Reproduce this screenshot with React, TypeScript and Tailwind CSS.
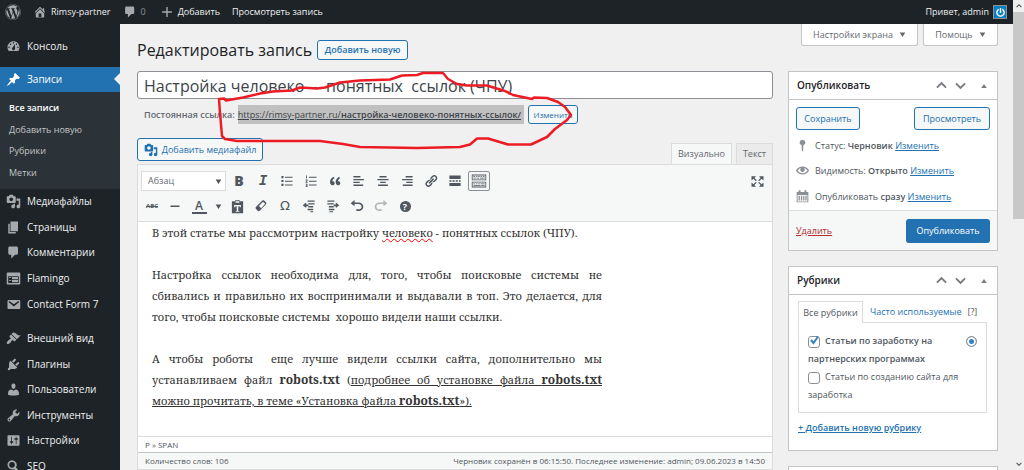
import { useState, type ReactNode } from "react";
import { FaPowerOff, FaWordpress } from "react-icons/fa";

const PATHS = {
  dashboard:
    "M3.76 16h12.48c1.1-1.37 1.76-3.11 1.76-5 0-4.42-3.58-8-8-8s-8 3.58-8 8c0 1.89.66 3.63 1.76 5zM10 4c.55 0 1 .45 1 1s-.45 1-1 1-1-.45-1-1 .45-1 1-1zM6 6c.55 0 1 .45 1 1s-.45 1-1 1-1-.45-1-1 .45-1 1-1zm8 0c.55 0 1 .45 1 1s-.45 1-1 1-1-.45-1-1 .45-1 1-1zm-5.37 5.55L12 7v6c0 1.1-.9 2-2 2s-2-.9-2-2c0-.57.24-1.08.63-1.45zM4 10c.55 0 1 .45 1 1s-.45 1-1 1-1-.45-1-1 .45-1 1-1zm12 0c.55 0 1 .45 1 1s-.45 1-1 1-1-.45-1-1 .45-1 1-1z",
  pin: "M10.44 3.02l1.82-1.82 6.36 6.35-1.83 1.82c-1.05-.68-2.48-.57-3.41.36l-.75.75c-.92.93-1.04 2.35-.35 3.41l-1.83 1.82-2.41-2.41-2.8 2.79c-.42.42-3.38 2.71-3.8 2.29s1.86-3.39 2.28-3.81l2.79-2.79L4.1 9.36l1.83-1.82c1.05.69 2.48.57 3.4-.36l.75-.75c.93-.92 1.05-2.35.36-3.41z",
  media:
    "M13 11V4c0-.55-.45-1-1-1h-1.67L9 1H5L3.67 3H2c-.55 0-1 .45-1 1v7c0 .55.45 1 1 1h10c.55 0 1-.45 1-1zM7 4.5c1.38 0 2.5 1.12 2.5 2.5S8.38 9.5 7 9.5 4.5 8.38 4.5 7 5.62 4.5 7 4.5zM14 6h5v10.5c0 1.38-1.12 2.5-2.5 2.5S14 17.88 14 16.5s1.12-2.5 2.5-2.5c.17 0 .34.02.5.05V9h-3V6zm-4 8.05V13h2v3.5c0 1.38-1.12 2.5-2.5 2.5S7 17.88 7 16.5 8.12 14 9.5 14c.17 0 .34.02.5.05z",
  page: "M6 15V2h10v13H6zm-1 1h8v2H3V5h2v11z",
  comments: "M5 2h9c1.1 0 2 .9 2 2v7c0 1.1-.9 2-2 2h-2l-5 5v-5H5c-1.1 0-2-.9-2-2V4c0-1.1.9-2 2-2z",
  feedback:
    "M2 2h16c.55 0 1 .45 1 1v14c0 .55-.45 1-1 1H2c-.55 0-1-.45-1-1V3c0-.55.45-1 1-1zm15 14V7H3v9h14zM4 8v1h3V8H4zm4 0v3h8V8H8zm-4 4v1h3v-1H4zm4 0v3h8v-3H8z",
  email:
    "M3.87 4h13.25C18.37 4 19 4.59 19 5.79v8.42c0 1.19-.63 1.79-1.88 1.79H3.87c-1.25 0-1.88-.6-1.88-1.79V5.79c0-1.2.63-1.79 1.88-1.79zm6.62 8.6l6.74-5.53c.24-.2.43-.66.13-1.07-.29-.41-.82-.42-1.17-.17l-5.7 3.86L4.8 5.83c-.35-.25-.88-.24-1.17.17-.3.41-.11.87.13 1.07z",
  appearance:
    "M14.48 11.06L7.41 3.99l1.5-1.5c.5-.56 2.3-.47 3.51.32 1.21.8 1.43 1.28 2.91 2.1 1.18.64 2.45 1.26 4.45.85zm-.71.71L6.7 4.7 4.93 6.47c-.39.39-.39 1.02 0 1.41l1.06 1.06c.39.39.39 1.03 0 1.42-.6.6-1.43 1.11-2.21 1.69-.35.26-.7.53-1.01.84C1.43 14.23.4 16.08 1.4 17.07c.99 1 2.84-.03 4.18-1.36.31-.31.58-.66.85-1.02.57-.78 1.08-1.61 1.69-2.21.39-.39 1.02-.39 1.41 0l1.06 1.06c.39.39 1.02.39 1.41 0z",
  plugins:
    "M13.11 4.36L9.87 7.6 8 5.73l3.24-3.24c.35-.34 1.05-.2 1.56.32.52.51.66 1.21.31 1.55zm-8 1.77l.91-1.12 9.01 9.01-1.19.84c-.71.71-2.63 1.16-3.82 1.16H6.14L4.9 17.26c-.59.59-1.54.59-2.12 0-.59-.58-.59-1.53 0-2.12l1.24-1.24v-3.88c0-1.13.4-3.19 1.09-3.89zm7.26 3.97l3.24-3.24c.34-.35 1.04-.21 1.55.31.52.51.66 1.21.31 1.55l-3.24 3.25z",
  users:
    "M10 9.25c-2.27 0-2.73-3.44-2.73-3.44C7 4.02 7.82 2 9.97 2c2.16 0 2.98 2.02 2.71 3.81 0 0-.41 3.44-2.68 3.44zm0 2.57L12.72 10c2.39 0 4.52 2.33 4.52 4.53v2.49s-3.65 1.13-7.24 1.13c-3.65 0-7.24-1.13-7.24-1.13v-2.49c0-2.25 1.94-4.48 4.47-4.48z",
  tools:
    "M16.68 9.77c-1.34 1.34-3.3 1.67-4.95.99l-5.41 6.52c-.99.99-2.59.99-3.58 0s-.99-2.59 0-3.57l6.52-5.42c-.68-1.65-.35-3.61.99-4.95 1.28-1.28 3.12-1.62 4.72-1.06l-2.89 2.89 2.82 2.82 2.86-2.87c.53 1.58.18 3.39-1.08 4.65zM3.81 16.21c.4.39 1.04.39 1.43 0 .4-.4.4-1.04 0-1.43-.39-.4-1.03-.4-1.43 0-.39.39-.39 1.03 0 1.43z",
  settings:
    "M18 16V4c0-.55-.45-1-1-1H3c-.55 0-1 .45-1 1v12c0 .55.45 1 1 1h14c.55 0 1-.45 1-1zM8 11h1c.55 0 1 .45 1 1s-.45 1-1 1H8v1.5c0 .28-.22.5-.5.5s-.5-.22-.5-.5V13H6c-.55 0-1-.45-1-1s.45-1 1-1h1V5.5c0-.28.22-.5.5-.5s.5.22.5.5V11zm5-2h-1c-.55 0-1-.45-1-1s.45-1 1-1h1V5.5c0-.28.22-.5.5-.5s.5.22.5.5V7h1c.55 0 1 .45 1 1s-.45 1-1 1h-1v5.5c0 .28-.22.5-.5.5s-.5-.22-.5-.5V9z",
  search: "M8 1.5a6.3 6.3 0 0 1 5.2 9.8l5.2 5.2-2.2 2.2-5.2-5.2A6.3 6.3 0 1 1 8 1.5zM8 4a3.8 3.8 0 1 0 0 7.6A3.8 3.8 0 0 0 8 4z",
  home: "M16 8.5l1.53 1.53-1.06 1.06L10 4.6l-6.47 6.49-1.06-1.06L10 2.5l4 4v-2h2v4zm-6-2.46l6 5.99V18H4v-5.97zM12 17v-5H8v5h4z",
  plus: "M17 9v2h-6v6H9v-6H3V9h6V3h2v6h6z",
  ul: "M2 3h3v3H2zM7 4h11v1.5H7zM2 8.5h3v3H2zM7 9.5h11V11H7zM2 14h3v3H2zM7 15h11v1.5H7z",
  ol: "M3 2h1.2v4.5H3zM7 4h11v1.5H7zM2.3 8H5v2l-1.2 1.5H5v1H2.2v-1L4 9.2H2.3zM7 9.5h11V11H7zM2.3 14H5v4.5H2.3v-1h1.5v-.8H2.6v-1h1.2V15H2.3zM7 15h11v1.5H7z",
  quote:
    "M9.49 13.22c0-.74-.2-1.38-.61-1.9-.62-.78-1.83-.88-2.53-.72-.29-1.65 1.11-3.75 2.92-4.65L7.88 4c-2.73 1.3-5.42 4.28-4.96 8.05C3.21 14.43 4.59 16 6.54 16c.85 0 1.56-.25 2.12-.75s.83-1.18.83-2.03zm8.05 0c0-.74-.2-1.38-.61-1.9-.63-.78-1.83-.88-2.53-.72-.29-1.65 1.11-3.75 2.92-4.65L15.93 4c-2.73 1.3-5.41 4.28-4.95 8.05.29 2.38 1.66 3.95 3.61 3.95.85 0 1.56-.25 2.12-.75s.83-1.18.83-2.03z",
  alignLeft: "M2 3h10v2H2zM2 7h15v2H2zM2 11h9v2H2zM2 15h14v2H2z",
  alignCenter: "M5 3h10v2H5zM2 7h16v2H2zM6 11h8v2H6zM3 15h14v2H3z",
  alignRight: "M8 3h10v2H8zM3 7h15v2H3zM9 11h9v2H9zM4 15h14v2H4z",
  link: "M17.74 2.76c1.68 1.69 1.68 4.41 0 6.1l-1.53 1.52c-1.12 1.12-2.7 1.47-4.14 1.09l2.62-2.61.76-.77.76-.76c.84-.84.84-2.2 0-3.04-.84-.85-2.2-.85-3.04 0l-.77.76-3.38 3.38c-.37-1.44-.02-3.02 1.1-4.14l1.52-1.53c1.69-1.68 4.42-1.68 6.1 0zM8.59 13.43l5.34-5.34c.42-.42.42-1.1 0-1.52-.44-.43-1.13-.39-1.53 0l-5.33 5.34c-.42.42-.42 1.1 0 1.52.44.43 1.13.39 1.52 0zm-.76 2.29l4.14-4.15c.38 1.44.03 3.02-1.09 4.14l-1.52 1.53c-1.69 1.68-4.41 1.68-6.1 0-1.68-1.68-1.68-4.42 0-6.1l1.53-1.52c1.12-1.12 2.7-1.47 4.14-1.1l-4.14 4.15c-.85.84-.85 2.2 0 3.05.84.84 2.2.84 3.04 0z",
  more: "M2 2h16v5H2zM2 9h3v2H2zM6.5 9h3v2h-3zM11 9h3v2h-3zM15.5 9H18v2h-2.5zM2 13h16v4H2z",
  kitchensink:
    "M1 2h18v7H1zM2 3v5h16V3zM1 11h18v7H1zM2 12v5h16v-5zM3 4h2v1H3zM6 4h2v1H6zM9 4h2v1H9zM12 4h2v1h-2zM15 4h2v1h-2zM3 6h3v1H3zM7 6h3v1H7zM11 6h6v1h-6zM3 13h2v1H3zM6 13h2v1H6zM9 13h2v1H9zM12 13h5v1h-5zM3 15h9v1H3zM13 15h4v1h-4z",
  fullscreen:
    "M2 3h6L5.8 5.2 9 8.3 7.8 9.5 4.5 6.3 2 8.7zM18 3h-6l2.2 2.2L11 8.3l1.2 1.2 3.3-3.2L18 8.7zM2 17h6l-2.2-2.2L9 11.7l-1.2-1.2-3.3 3.2L2 11.3zM18 17h-6l2.2-2.2-3.2-3.1 1.2-1.2 3.3 3.2 2.5-2.4z",
  hr: "M1 9h18v3H1z",
  paste: "M3 3h4V1.5h6V3h4.5v16h-15V3zM7.5 3v2h5V3zM5.5 8v3H7V9.7h2V16H7.5v1h5v-1H11V9.7h2V11h1.5V8z",
  eraser:
    "M11.5 2.5c1-1 2-1.2 3-.3l2.5 2.5c1 1 .8 2-.2 3L8.5 16.5c-1 1-2.2 1.2-3.2.2l-2.4-2.5c-1-1-.8-2 .2-3zM12.8 3.8L7 10l3.2 3.2L16 6.8z",
  outdent: "M8 2h10v2H8zM9 6h9v2H9zM9 10h7v2H9zM8 14h8v2H8zM12 17.5h4V19h-4zM1 9l5-4v2.8h3v2.4H6V13z",
  indent: "M2 2h10v2H2zM2 6h9v2H2zM4 10h7v2H4zM4 14h8v2H4zM5 17.5h5V19H5zM19 9l-5-4v2.8h-3v2.4h3V13z",
  undo: "M12 5H6.5V1.5L1 6l5.5 4.5V7H12c2.8 0 4.6 1.5 4.6 4 0 2.3-1.8 3.8-4.6 3.8H9V17h3c4.2 0 7-2.5 7-6s-2.8-6-7-6z",
  redo: "M8 5h5.5V1.5L19 6l-5.5 4.5V7H8c-2.8 0-4.6 1.5-4.6 4 0 2.3 1.8 3.8 4.6 3.8h3V17H8c-4.2 0-7-2.5-7-6s2.8-6 7-6z",
  status: "M10 1a4.5 4.5 0 0 1 1.3 8.8L11 19H9l-.3-9.2A4.5 4.5 0 0 1 10 1z",
  eye: "M19.7 9.4C17.7 6 14 3.9 10 3.9S2.3 6 .3 9.4L0 10l.3.6c2 3.4 5.7 5.5 9.7 5.5s7.7-2.1 9.7-5.5l.3-.6-.3-.6zM10 14.1c-3.1 0-6-1.6-7.7-4.1C3.6 8 5.7 6.6 8 6.1c-.9.6-1.5 1.7-1.5 2.9 0 1.9 1.6 3.5 3.5 3.5s3.5-1.6 3.5-3.5c0-1.2-.6-2.3-1.5-2.9 2.3.5 4.4 1.9 5.7 3.9-1.7 2.5-4.6 4.1-7.7 4.1z",
  calendar: "M1 3h3V.5h3V3h6V.5h3V3h3v16H1zM2.5 7.5v10h15v-10zM4 9h2v7H4zM7.5 9h2v7h-2zM11 9h2v7h-2zM14.5 9h2v7h-2z",
  up: "M10 5l7 7-1.8 1.8L10 8.6l-5.2 5.2L3 12z",
  down: "M10 15l7-7-1.8-1.8L10 11.4 4.8 6.2 3 8z",
  caretDown: "M2 4h16l-8 13z",
  caretUp: "M3 15h14L10 5z",
};

type IconName = keyof typeof PATHS;

function Icon({ name, className = "size-4" }: { name: IconName; className?: string }) {
  return (
    <svg viewBox="0 0 20 20" fill="currentColor" fillRule="evenodd" className={"shrink-0 " + className} aria-hidden="true">
      <path d={PATHS[name]} />
    </svg>
  );
}

const SUBMENU = ["Все записи", "Добавить новую", "Рубрики", "Метки"];

const CONTENT_MENU: [IconName, string][] = [
  ["media", "Медиафайлы"],
  ["page", "Страницы"],
  ["comments", "Комментарии"],
  ["feedback", "Flamingo"],
  ["email", "Contact Form 7"],
];

const SITE_MENU: [IconName, string][] = [
  ["appearance", "Внешний вид"],
  ["plugins", "Плагины"],
  ["users", "Пользователи"],
  ["tools", "Инструменты"],
  ["settings", "Настройки"],
  ["search", "SEO"],
];

function MenuItem({ icon, label }: { icon: IconName; label: string }) {
  return (
    <a href="#" className="flex items-center gap-1.5 pl-[6px] text-[10px] text-[#f0f0f1]">
      <Icon name={icon} className="size-[15px] text-[#a7aaad]" />
      {label}
    </a>
  );
}

function AdminBar() {
  return (
    <header className="flex h-6 shrink-0 items-center bg-[#1d2327] text-[#f0f0f1]">
      <a href="#" aria-label="WordPress" className="ml-[5px] text-[#a7aaad]">
        <FaWordpress className="size-4" />
      </a>
      <a href="#" className="ml-3 flex items-center gap-1">
        <Icon name="home" className="size-[14px] text-[#a7aaad]" />
        Rimsy-partner
      </a>
      <a href="#" className="ml-3 flex items-center gap-1 text-[#8c8f94]">
        <Icon name="comments" className="size-[14px] text-[#a7aaad]" />0
      </a>
      <a href="#" className="ml-[14px] flex items-center gap-1">
        <Icon name="plus" className="size-[14px] text-[#a7aaad]" />
        Добавить
      </a>
      <a href="#" className="ml-3">
        Просмотреть запись
      </a>
      <a href="#" className="mr-[6px] ml-auto flex items-center gap-1">
        Привет, admin
        <span className="grid size-[14px] place-items-center border border-[#8c8f94] bg-[#0a7fc2] text-white">
          <FaPowerOff className="size-[9px]" />
        </span>
      </a>
    </header>
  );
}

function Sidebar() {
  return (
    <nav className="w-[120px] shrink-0 bg-[#1d2327] pt-[9px]">
      <div className="grid h-[26px]">
        <MenuItem icon="dashboard" label="Консоль" />
      </div>
      <a href="#" className="relative mt-2 flex h-[25px] items-center gap-1.5 bg-[#2271b1] pl-[6px] text-[10px] text-white">
        <Icon name="pin" className="size-[15px]" />
        Записи
        <span className="absolute top-[6px] right-0 border-y-[6px] border-r-[6px] border-y-transparent border-r-[#f0f0f1]" />
      </a>
      <ul className="grid h-[97px] bg-[#2c3338] pt-[5px] pb-[6px] text-[#c3c4c7]">
        {SUBMENU.map((label, i) => (
          <li key={label} className="flex items-center pl-[9px]">
            <a href="#" className={i === 0 ? "font-semibold text-white" : ""}>
              {label}
            </a>
          </li>
        ))}
      </ul>
      <div className="grid h-32">
        {CONTENT_MENU.map(([icon, label]) => (
          <MenuItem key={label} icon={icon} label={label} />
        ))}
      </div>
      <div className="mt-[9px] grid h-[153px]">
        {SITE_MENU.map(([icon, label]) => (
          <MenuItem key={label} icon={icon} label={label} />
        ))}
      </div>
    </nav>
  );
}

function OutlineButton({ className, children }: { className: string; children: ReactNode }) {
  return (
    <button
      type="button"
      className={
        "flex items-center justify-center rounded-[3px] border border-[#2271b1] bg-[#f6f7f7] whitespace-nowrap text-[#2271b1] " +
        className
      }
    >
      {children}
    </button>
  );
}

function ToolButton({ title, className = "w-6", children }: { title: string; className?: string; children: ReactNode }) {
  return (
    <button type="button" aria-label={title} className={"flex h-5 items-center justify-center " + className}>
      {children}
    </button>
  );
}

const ROW_ONE: [IconName, string][] = [
  ["ul", "Маркированный список"],
  ["ol", "Нумерованный список"],
  ["quote", "Цитата"],
  ["alignLeft", "По левому краю"],
  ["alignCenter", "По центру"],
  ["alignRight", "По правому краю"],
  ["link", "Ссылка"],
  ["more", "Тег «Далее»"],
];

function Toolbar() {
  return (
    <div className="border-b border-[#dcdcde] bg-[#f6f7f7] px-[3px] pt-[6px] pb-[5px] text-[#50575e]">
      <div className="flex items-center">
        <div className="relative">
          <select
            aria-label="Формат"
            className="block h-5 w-[85px] appearance-none border border-[#dcdcde] bg-white pl-[6px] text-[9px] text-[#646970]"
          >
            <option>Абзац</option>
          </select>
          <Icon name="caretDown" className="pointer-events-none absolute top-[7px] right-1 size-[7px]" />
        </div>
        <ToolButton title="Жирный" className="ml-px w-6">
          <span className="text-[14px] leading-none font-extrabold">B</span>
        </ToolButton>
        <ToolButton title="Курсив">
          <span className="font-['Liberation_Mono'] text-[14px] leading-none font-bold italic">I</span>
        </ToolButton>
        {ROW_ONE.map(([icon, title]) => (
          <ToolButton key={icon} title={title}>
            <Icon name={icon} className="size-[14px]" />
          </ToolButton>
        ))}
        <ToolButton title="Дополнительная панель" className="ml-px w-[22px] rounded-[2px] border border-[#8c8f94]">
          <Icon name="kitchensink" className="size-4" />
        </ToolButton>
        <ToolButton title="На весь экран" className="ml-auto w-6">
          <Icon name="fullscreen" className="size-[15px]" />
        </ToolButton>
      </div>
      <div className="mt-[5px] flex items-center">
        <ToolButton title="Зачёркнутый" className="w-[22px]">
          <span className="text-[6px] font-bold line-through">ABC</span>
        </ToolButton>
        <ToolButton title="Горизонтальная линия">
          <Icon name="hr" className="size-[10px]" />
        </ToolButton>
        <ToolButton title="Цвет текста">
          <span className="w-[15px] border-b-2 border-current text-center text-[12px] leading-[13px] font-semibold">A</span>
        </ToolButton>
        <ToolButton title="Выбрать цвет" className="w-[14px]">
          <Icon name="caretDown" className="size-[7px]" />
        </ToolButton>
        <ToolButton title="Вставить как текст">
          <Icon name="paste" className="size-[15px]" />
        </ToolButton>
        <ToolButton title="Очистить форматирование">
          <Icon name="eraser" className="size-[14px]" />
        </ToolButton>
        <ToolButton title="Произвольный символ">
          <span className="font-['DejaVu_Sans'] text-[13px]">Ω</span>
        </ToolButton>
        <ToolButton title="Уменьшить отступ">
          <Icon name="outdent" className="size-[14px]" />
        </ToolButton>
        <ToolButton title="Увеличить отступ">
          <Icon name="indent" className="size-[14px]" />
        </ToolButton>
        <ToolButton title="Отменить">
          <Icon name="undo" className="size-[14px]" />
        </ToolButton>
        <ToolButton title="Повторить" className="w-6 opacity-40">
          <Icon name="redo" className="size-[14px]" />
        </ToolButton>
        <ToolButton title="Горячие клавиши">
          <span className="grid size-[11px] place-items-center rounded-full bg-[#50575e] text-[9px] leading-none font-bold text-white">
            ?
          </span>
        </ToolButton>
      </div>
    </div>
  );
}

// One line of a justified paragraph, stretched to the full measure.
function Line({ children }: { children: ReactNode }) {
  return <span className="block [text-align-last:justify]">{children}</span>;
}

function FileName() {
  return <strong className="text-[12px]">robots.txt</strong>;
}

function Editor() {
  return (
    <section className="border border-[#dcdcde] bg-white">
      <Toolbar />
      <div className="min-h-[214px] px-[14px] font-['Noto_Serif','Liberation_Serif',serif] text-[11px] leading-[21px] text-[#333]">
        <div className="max-w-[450px]">
          <p>
            В этой статье мы рассмотрим настройку{" "}
            <span className="underline decoration-[#f00] decoration-wavy decoration-1 underline-offset-1">человеко</span> -
            понятных ссылок (ЧПУ).
          </p>
          <p className="mt-[21px]">
            <Line>Настройка ссылок необходима для, того, чтобы поисковые системы не</Line>
            <Line>сбивались и правильно их воспринимали и выдавали в топ. Это делается, для</Line>
            того, чтобы поисковые системы&nbsp; хорошо видели наши ссылки.
          </p>
          <p className="mt-[21px]">
            <Line>А чтобы роботы&nbsp; еще лучше видели ссылки сайта, дополнительно мы</Line>
            <Line>
              устанавливаем файл <FileName /> (
              <span className="underline">
                подробнее об установке файла <FileName />
              </span>
            </Line>
            <span className="underline">
              можно прочитать, в теме «Установка файла <FileName />
              »).
            </span>
          </p>
        </div>
      </div>
      <div className="flex h-4 items-center border-t border-[#dcdcde] px-[7px] text-[8px] text-[#50575e]">P » SPAN</div>
      <div className="flex h-[17px] items-center justify-between border-t border-[#c3c4c7] bg-[#f6f7f7] px-[7px] text-[8px] text-[#50575e]">
        <span>Количество слов: 106</span>
        <span>Черновик сохранён в 06:15:50. Последнее изменение: admin; 09.06.2023 в 14:50</span>
      </div>
    </section>
  );
}

function PostForm() {
  const [title, setTitle] = useState("Настройка человеко  -  понятных  ссылок (ЧПУ)");

  return (
    <div className="min-w-0 flex-1">
      <input
        type="text"
        aria-label="Заголовок"
        value={title}
        onChange={(e) => setTitle(e.target.value)}
        className="block h-7 w-full rounded-[3px] border border-[#8c8f94] bg-white px-[6px] pt-0.5 text-[16px] text-[#3c434a]"
      />
      <div className="mt-[6px] flex h-[19px] items-center px-[7px] text-[#646970]">
        <span className="font-semibold">Постоянная ссылка:</span>
        <a href="#" className="ml-[3px] bg-[#c0c0c0] pr-[3px] leading-[19px] text-[#3c434a] underline">
          https://rimsy-partner.ru/<b className="font-semibold">настройка-человеко-понятных-ссылок/</b>
        </a>
        <OutlineButton className="ml-1 h-[19px] w-[50px] text-[8px]">Изменить</OutlineButton>
      </div>
      <div className="mt-[14px] flex items-end justify-between">
        <OutlineButton className="mb-[3px] h-[23px] w-[126px] gap-1">
          <Icon name="media" className="size-[14px]" />
          Добавить медиафайл
        </OutlineButton>
        <div className="flex gap-1 text-[#646970]">
          <button type="button" className="h-[21px] w-[61px] border border-b-0 border-[#dcdcde] bg-[#f6f7f7]">
            Визуально
          </button>
          <button type="button" className="h-[21px] w-[37px] border border-b-0 border-[#dcdcde] bg-[#ebebeb]">
            Текст
          </button>
        </div>
      </div>
      <Editor />
    </div>
  );
}

function MetaBox({ title, children }: { title: string; children: ReactNode }) {
  return (
    <section className="mb-[15px] border border-[#c3c4c7] bg-white text-[#50575e]">
      <div className="flex h-7 items-center border-b border-[#c3c4c7] pr-[9px] pl-2 text-[#787c82]">
        <h2 className="mr-auto text-[10px] font-semibold text-[#1d2327]">{title}</h2>
        <button type="button" aria-label="Вверх" className="mr-1">
          <Icon name="up" className="size-[15px]" />
        </button>
        <button type="button" aria-label="Вниз" className="mr-3">
          <Icon name="down" className="size-[15px]" />
        </button>
        <button type="button" aria-label="Свернуть">
          <Icon name="caretUp" className="size-2" />
        </button>
      </div>
      {children}
    </section>
  );
}

const STATUS: [IconName, string, string][] = [
  ["status", "Статус:", "Черновик"],
  ["eye", "Видимость:", "Открыто"],
  ["calendar", "Опубликовать", "сразу"],
];

function PublishBox() {
  return (
    <MetaBox title="Опубликовать">
      <div className="flex justify-between px-[7px] pt-[7px]">
        <OutlineButton className="h-[23px] w-16">Сохранить</OutlineButton>
        <OutlineButton className="h-[23px] w-[76px]">Просмотреть</OutlineButton>
      </div>
      <ul className="grid h-20 pt-[3px] pb-px">
        {STATUS.map(([icon, label, value]) => (
          <li key={label} className="flex items-center gap-[6px] pl-[7px]">
            <Icon name={icon} className="size-[13px] text-[#8c8f94]" />
            <span>
              {label} <b className="font-semibold">{value}</b>{" "}
              <a href="#" className="text-[#2271b1] underline">
                Изменить
              </a>
            </span>
          </li>
        ))}
      </ul>
      <div className="flex h-10 items-center justify-between border-t border-[#dcdcde] bg-[#f6f7f7] px-[7px]">
        <a href="#" className="text-[#b32d2e] underline">
          Удалить
        </a>
        <button type="button" className="h-6 w-[84px] rounded-[3px] bg-[#2271b1] text-white">
          Опубликовать
        </button>
      </div>
    </MetaBox>
  );
}

function CategoriesBox() {
  const [earn, setEarn] = useState(true);
  const [site, setSite] = useState(false);
  const box =
    "mr-[5px] inline-block size-3 appearance-none rounded-[3px] border border-[#8c8f94] bg-white align-middle";

  return (
    <MetaBox title="Рубрики">
      <div className="px-[9px] pt-[6px] pb-[15px]">
        <div className="flex items-end">
          <button type="button" className="z-10 -mb-px h-[22px] w-[65px] border border-b-0 border-[#dcdcde] bg-white">
            Все рубрики
          </button>
          <button type="button" className="ml-[7px] h-[21px] text-[#2271b1]">
            Часто используемые
          </button>
          <a href="#" className="ml-[6px] h-[21px] leading-[21px]">
            [?]
          </a>
        </div>
        <div className="mr-px min-h-[91px] border border-[#dcdcde] px-[9px] pt-[9px] leading-[18px]">
          <div className="flex items-start justify-between">
            <label className="w-[136px] font-semibold">
              <span className="relative">
                <input type="checkbox" checked={earn} onChange={(e) => setEarn(e.target.checked)} className={box} />
                {earn && (
                  <svg viewBox="0 0 12 12" className="pointer-events-none absolute top-0 left-0 size-3" aria-hidden="true">
                    <path d="M3 6l2.5 3L10 2.5" fill="none" stroke="#3582c4" strokeWidth="2" />
                  </svg>
                )}
              </span>
              Статьи по заработку на партнерских программах
            </label>
            <input
              type="radio"
              name="primary"
              aria-label="Основная рубрика"
              defaultChecked
              className="mt-1 size-[11px] appearance-none rounded-full border border-[#8c8f94] bg-white checked:bg-[#3582c4] checked:shadow-[inset_0_0_0_2px_white]"
            />
          </div>
          <label className="block w-[160px]">
            <input type="checkbox" checked={site} onChange={(e) => setSite(e.target.checked)} className={box} />
            Статьи по созданию сайта для заработка
          </label>
        </div>
        <a href="#" className="mt-2 block font-semibold text-[#2271b1] underline">
          + Добавить новую рубрику
        </a>
      </div>
    </MetaBox>
  );
}

function ScreenTab({ className, children }: { className: string; children: ReactNode }) {
  return (
    <button
      type="button"
      className={
        "flex h-[22px] items-center justify-center gap-1.5 rounded-b-[3px] border border-t-0 border-[#c3c4c7] bg-white text-[#646970] " +
        className
      }
    >
      {children}
      <Icon name="caretDown" className="size-[7px]" />
    </button>
  );
}

// Hand-drawn loop round the permalink row.
function Marker() {
  return (
    <svg
      viewBox="0 0 600 160"
      className="pointer-events-none absolute top-0 left-0 z-20 h-[160px] w-[600px]"
      fill="none"
      stroke="#ed1c24"
      strokeWidth="2.5"
      strokeLinejoin="round"
      strokeLinecap="round"
      aria-hidden="true"
    >
      <path d="M219 99l5-.5 2 2 17-3 17-4 13-2 19-1 8-3 17 1 8-1 15-5 20-2 30-1 12-4 15-.5 6-2h20l5 6 9 5 10 1.5h20l8 2.5 10 3 8 4 19 4 2-1.5 13 .5 11 4 7 5 6 8-4 5-12 9-8 8-16 7.5h-23l-20-6h-11l-7 6-10 2.5-43 1-57-1-17-3-23-3h-83l-12-2-3-3-2-23z" />
    </svg>
  );
}

export default function App() {
  return (
    <div className="flex h-screen overflow-hidden bg-[#f0f0f1] font-['Open_Sans','Noto_Sans',sans-serif] text-[9px]">
      <div className="relative flex min-w-0 flex-1 flex-col">
        <AdminBar />
        <div className="flex min-h-0 flex-1">
          <Sidebar />
          <main className="min-w-0 flex-1 pr-[15px] pl-[17px]">
            <div className="flex h-[47px] items-start">
              <h1 className="mt-[13px] text-[16px] leading-[26px] text-[#1d2327]">Редактировать запись</h1>
              <OutlineButton className="mt-4 ml-[5px] h-5 w-[91px] font-semibold">Добавить новую</OutlineButton>
              <div className="ml-auto flex gap-[5px]">
                <ScreenTab className="w-[117px]">Настройки экрана</ScreenTab>
                <ScreenTab className="w-[75px]">Помощь</ScreenTab>
              </div>
            </div>
            <div className="flex items-start gap-[15px]">
              <PostForm />
              <aside className="w-[210px] shrink-0">
                <PublishBox />
                <CategoriesBox />
                <MetaBox title="Метки">{null}</MetaBox>
              </aside>
            </div>
          </main>
        </div>
        <Marker />
      </div>
      <div className="flex w-[11px] shrink-0 flex-col items-center bg-[#f0f0f1] text-[#505050]">
        <Icon name="up" className="my-0.5 size-2" />
        <div className="h-[207px] w-full bg-[#c8c8c8]" />
        <Icon name="down" className="mt-auto mb-0.5 size-2" />
      </div>
    </div>
  );
}
